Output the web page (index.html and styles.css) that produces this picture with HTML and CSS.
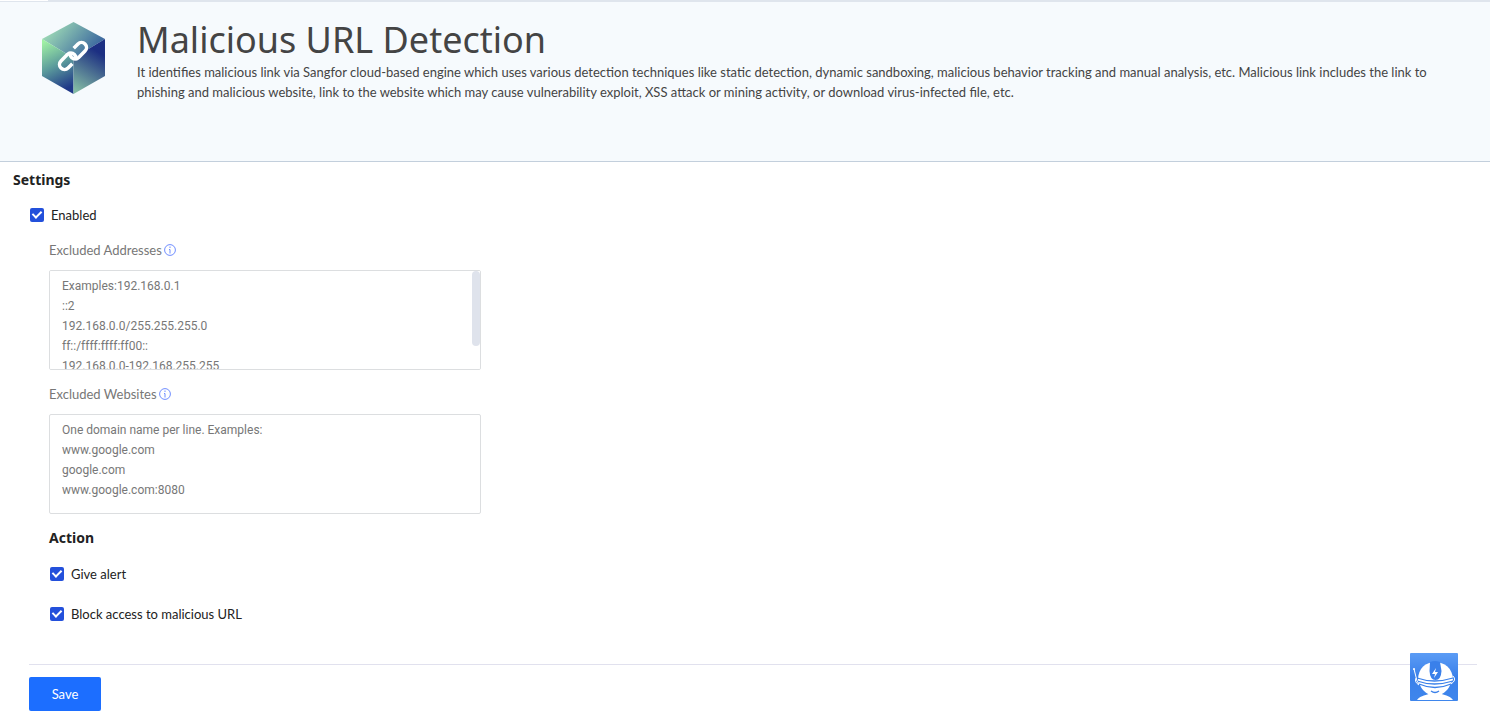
FILE: index.html
```html
<!DOCTYPE html>
<html lang="en">
<head>
	<meta charset="UTF-8">
	<title>Malicious URL Detection</title>
	<link rel="stylesheet" href="styles.css">
</head>
<body>
	<header class="banner">
		<svg class="logo" width="64" height="72" viewBox="0 0 64 72">
			<defs>
				<linearGradient id="top" x1="0" y1="0.2" x2="1" y2="0.7"><stop offset="0" stop-color="#a8e6b8"/><stop offset="1" stop-color="#2f5a9c"/></linearGradient>
				<linearGradient id="left" gradientUnits="userSpaceOnUse" x1="2" y1="20" x2="26" y2="66"><stop offset="0" stop-color="#a0f0a4"/><stop offset="0.5" stop-color="#5c9c9c"/><stop offset="1" stop-color="#1f3888"/></linearGradient>
				<linearGradient id="right" gradientUnits="userSpaceOnUse" x1="32" y1="68" x2="56" y2="30"><stop offset="0" stop-color="#84bca4"/><stop offset="1" stop-color="#1c2f82"/></linearGradient>
			</defs>
			<path fill="url(#top)" d="M31.500 0L63 17L31.500 36L0 17z"/>
			<path fill="url(#left)" d="M0 17L31.500 36V72L0 54z"/>
			<path fill="url(#right)" d="M31.500 36L63 17V54L31.500 72z"/>
			<g transform="translate(31 34) rotate(-45)" fill="none" stroke="#fff" stroke-width="3.500">
				<path d="M-6 5H-12A5 5 0 0 1-12-5H-3A5 5 0 0 1 2 0A5 5 0 0 1-1 4.500"/>
				<path d="M6-5H12A5 5 0 0 1 12 5H3A5 5 0 0 1-2 0A5 5 0 0 1 1-4.500"/>
			</g>
		</svg>
		<div class="intro">
			<h1>Malicious URL Detection</h1>
			<p>It identifies malicious link via Sangfor cloud-based engine which uses various detection techniques like static detection, dynamic sandboxing, malicious behavior tracking and manual analysis, etc. Malicious link includes the link to phishing and malicious website, link to the website which may cause vulnerability exploit, XSS attack or mining activity, or download virus-infected file, etc.</p>
		</div>
	</header>

	<form class="settings">
		<h2>Settings</h2>
		<label class="check enabled"><input type="checkbox" checked>Enabled</label>

		<div class="group">
			<div class="field-name">
				<label for="addresses">Excluded Addresses</label>
				<svg class="info" width="12" height="12" viewBox="0 0 12 12"><circle cx="6" cy="6" r="5.400"/><path d="M6 2.500V4M5 5.500H6V9.500"/></svg>
			</div>
			<div class="field">
				<textarea id="addresses" placeholder="Examples:192.168.0.1
::2
192.168.0.0/255.255.255.0
ff::/ffff:ffff:ff00::
192.168.0.0-192.168.255.255"></textarea>
				<span class="thumb"></span>
			</div>

			<div class="field-name">
				<label for="websites">Excluded Websites</label>
				<svg class="info" width="12" height="12" viewBox="0 0 12 12"><circle cx="6" cy="6" r="5.400"/><path d="M6 2.500V4M5 5.500H6V9.500"/></svg>
			</div>
			<div class="field">
				<textarea id="websites" placeholder="One domain name per line. Examples:
www.google.com
google.com
www.google.com:8080"></textarea>
			</div>

			<h3>Action</h3>
			<label class="check"><input type="checkbox" checked>Give alert</label>
			<label class="check"><input type="checkbox" checked>Block access to malicious URL</label>
		</div>

		<div class="bottom">
			<button class="save" type="submit">Save</button>
		</div>
	</form>

	<button class="helper" type="button" aria-label="Assistant">
		<svg width="48" height="48" viewBox="0 0 48 48">
			<defs><linearGradient id="bg" x1="0" y1="0" x2="0" y2="1"><stop offset="0" stop-color="#5b9cf5"/><stop offset="0.5" stop-color="#3a80ea"/><stop offset="1" stop-color="#3f86ec"/></linearGradient></defs>
			<rect width="48" height="48" rx="1" fill="url(#bg)"/>
			<path fill="#fff" d="M7 47C11 42 17 42 20 40.500H30C34 42 39 42 43 47z"/>
			<path fill="#fff" d="M10 32C12 38 19 43 25 43C31 43 38 38 40 32z"/>
			<path fill="#fff" d="M8 27C8 15 16 9 25 9C34 9 43 15 43 27L40 32C32 35 17 35 9 31z"/>
			<path fill="#3a80ea" d="M20 9Q25 7 30 9L31.500 18Q31 27 25.500 27Q20 27 19.500 18z"/>
			<path fill="#fff" d="M26 15L22 21H25L24 25L28 19H25z"/>
			<g fill="none" stroke="#3a80ea" stroke-width="1.300">
				<path d="M7 25Q24 31 43 25M7 28Q24 34 43 28M9 31Q25 38 41 31"/>
				<path d="M21 38Q25 41 29 38"/>
			</g>
			<g fill="none" stroke="#fff">
				<path d="M4 16L7 28L9 31M6 25Q4 29 9 32M43 23Q47 27 41 31"/>
			</g>
			<circle cx="4" cy="16" r="1" fill="#fff"/>
		</svg>
	</button>
</body>
</html>
```

FILE: styles.css
```css
*{box-sizing: border-box;margin: 0;padding: 0}
body{font-family: Lato,"Noto Sans",sans-serif;font-size: 13px;line-height: 20px;color: #222;background: #fff}

.banner{display: flex;min-height: 162px;padding: 22px 40px 0 42px;background: linear-gradient(#fff,#fff) 0 0/48px 1px no-repeat,linear-gradient(#dfe5ed,#dfe5ed) 0 0/100% 2px no-repeat,#f6fafd;border-bottom: 1px solid #c3cfdc}
.logo{flex: none;margin-right: 31px}
.intro{flex: 1;color: #444}
.intro h1{font-family: "Noto Sans",sans-serif;font-size: 36px;line-height: 36px;margin-bottom: 4px;font-weight: 400}

.settings{padding: 8px 13px 5px}
.settings h2,.settings h3{font-family: "Noto Sans",sans-serif;font-size: 14px;line-height: 20px;font-weight: 700;color: #222}
.check{display: flex;align-items: center;width: fit-content;margin-bottom: 20px;cursor: pointer}
.check input{appearance: none;width: 14px;height: 14px;margin: 0 7px 0 1px;border-radius: 2px;background: #2350db;position: relative}
.check input:checked::after{content: "";position: absolute;left: 4px;top: 1px;width: 4px;height: 7px;border: solid #fff;border-width: 0 2px 2px 0;transform: rotate(45deg)}
.enabled{margin: 15px 0 15px 16px}

.group{margin-left: 36px}
.field-name{display: flex;align-items: center;color: #777}
.info{margin-left: 2px;fill: none;stroke: #6f8dff}
.field{position: relative;width: 432px;max-width: 100%;margin: 10px 0 14px}
textarea{display: block;width: 100%;height: 100px;padding: 5px 12px;border: 1px solid #dcdee0;border-radius: 2px;background: #fff;font-family: Roboto,sans-serif;font-size: 12px;line-height: 20px;color: #333;resize: none;outline: none}
textarea::placeholder{color: #777}
.thumb{position: absolute;top: 1px;right: 1px;width: 8px;height: 75px;border-radius: 4px;background: #dfe3ec}
.group h3{margin-bottom: 16px}

.bottom{margin: 40px 0 0 16px;padding-top: 12px;border-top: 1px solid #e1e1ee}
.save{display: block;width: 72px;height: 34px;border: none;border-radius: 2px;background: #1c6eff;color: #fff;font-family: inherit;font-size: 13px;cursor: pointer}

.helper{position: fixed;right: 32px;bottom: 15px;width: 48px;height: 48px;border: none;background: none;cursor: pointer}
.helper svg{display: block}
```
